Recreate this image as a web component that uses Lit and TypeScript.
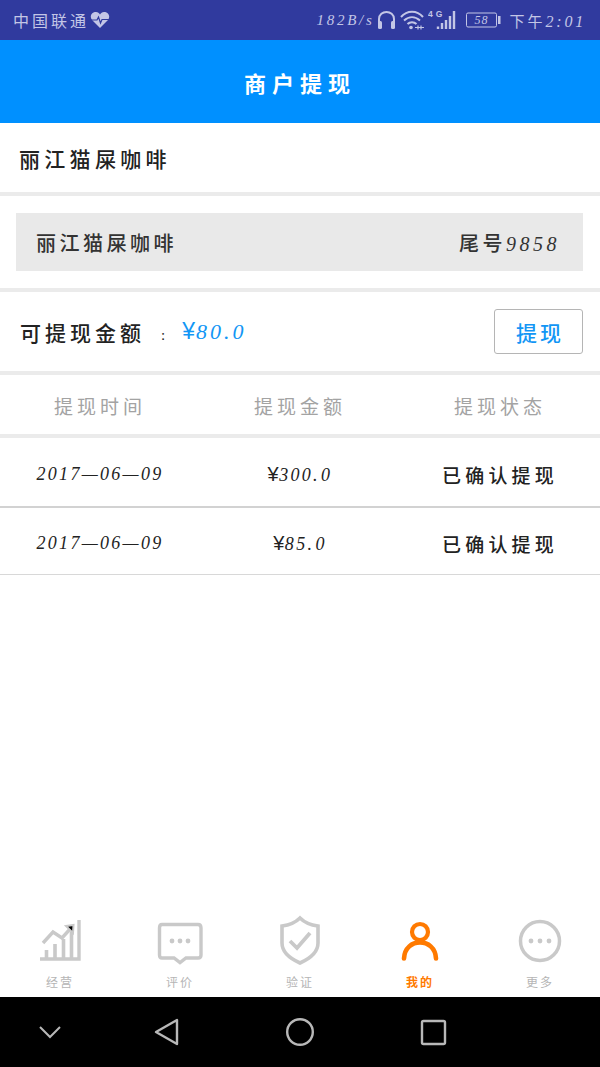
import { LitElement, html, css, svg } from "lit";
import { customElement } from "lit/decorators.js";

const dots = (a: number, b: number, c: number) => svg`
  <circle cx=${a} cy="941" r="2.4" class="dot"/><circle cx=${b} cy="941" r="2.4" class="dot"/><circle cx=${c} cy="941" r="2.4" class="dot"/>`;

const tabs = [
  { label: "经营", icon: svg`<path d="M46.500 960V950M55 960V944M63.500 960V939M71.500 960V932" stroke-width="3.600"/><path d="M43 943L53 932L62 938L71 928" stroke-width="3.400" fill="none"/><path d="M66 926L73.500 925L73 933Z" stroke-width="2"/><path d="M40 959H79V920" stroke-width="3.400" fill="none"/>` },
  { label: "评价", icon: svg`<path d="M162 924.500H198Q201 924.500 201 928V955Q201 958 198 958H186L180 962.500L174 958H162Q159.500 958 159.500 955V928Q159.500 924.500 162 924.500Z" stroke-width="3.400" fill="none"/>${dots(172, 180, 188)}` },
  { label: "验证", icon: svg`<path d="M300 918C304 922 310 925 318 926V943Q318 955 300 963Q282 955 282 943V926C290 925 296 922 300 918Z" stroke-width="3.600" fill="none"/><path d="M290 941L297 948L310 933" stroke-width="3.800" fill="none"/>` },
  { label: "我的", active: true, icon: svg`<circle cx="420" cy="932" r="8" stroke-width="4.200" fill="none"/><path d="M404 958.500C405 937 435 937 436 958.500" stroke-width="4.600" stroke-linecap="round" fill="none"/>` },
  { label: "更多", icon: svg`<circle cx="540" cy="941" r="19.500" stroke-width="3.500" fill="none"/>${dots(531, 540, 549)}` },
];

const records = [
  { date: "2017—06—09", amount: "300", frac: "0", wide: true },
  { date: "2017—06—09", amount: "85", frac: "0", wide: false },
];

@customElement("app-root")
export class AppRoot extends LitElement {
  static styles = css`
    :host {
      display: flex;
      flex-direction: column;
      width: 600px;
      height: 1067px;
      background: #fff;
      overflow: hidden;
      font-family: "Liberation Serif", "Noto Sans CJK SC", serif;
      color: #222;
    }
    i { font-style: italic; }
    .status {
      height: 40px;
      flex: none;
      background: #303a9e;
      color: #c3c6e6;
      display: flex;
      align-items: center;
      padding: 0 14px 0 13px;
      font-size: 16px;
      letter-spacing: 3px;
      box-sizing: border-box;
    }
    .status svg { flex: none; display: block; }
    .carrier { margin-right: 1px; }
    .spacer { flex: 1; }
    .speed { font-size: 15px; letter-spacing: 2.700px; margin-right: 3px; }
    .clock { font-size: 15px; letter-spacing: 3px; margin-left: 8px; white-space: nowrap; }
    .clock i { font-size: 16px; letter-spacing: 2.800px; }
    .header {
      height: 83px;
      flex: none;
      background: #0090ff;
      color: #fff;
      display: flex;
      align-items: center;
      justify-content: center;
      font-size: 22px;
      font-weight: 700;
      letter-spacing: 6px;
    }
    .store {
      height: 69px;
      flex: none;
      display: flex;
      align-items: center;
      padding-left: 19px;
      font-size: 21px;
      font-weight: 500;
      letter-spacing: 4.300px;
    }
    .sep { height: 4px; flex: none; background: #ebebeb; }
    .bank-wrap { height: 92px; flex: none; padding: 17px 17px 17px 16px; box-sizing: border-box; }
    .bank {
      height: 58px;
      background: #e9e9e9;
      display: flex;
      align-items: center;
      justify-content: space-between;
      padding: 0 23px 0 20px;
      font-size: 20px;
      font-weight: 500;
      letter-spacing: 3.500px;
      color: #333;
    }
    .balance {
      height: 79px;
      flex: none;
      display: flex;
      align-items: center;
      padding: 0 17px 0 20px;
      font-size: 21px;
      font-weight: 500;
      letter-spacing: 4px;
    }
    .colon { margin-left: 16px; font-size: 15px; padding-top: 8px; }
    .money { margin-left: 13px; color: #1296f5; font-size: 22px; letter-spacing: 3px; font-weight: 400; }
    .yen { font-size: 23px; font-family: "Liberation Sans", sans-serif; letter-spacing: 1px; }
    .btn {
      margin-left: auto;
      width: 89px;
      height: 45px;
      box-sizing: border-box;
      border: 1px solid #b5b5b5;
      border-radius: 3px;
      background: #fff;
      color: #1296f5;
      font: inherit;
      font-size: 21px;
      font-weight: 500;
      letter-spacing: 3px;
      padding: 0 0 0 3px;
    }
    .row {
      display: grid;
      grid-template-columns: repeat(3, 1fr);
      align-items: center;
      text-align: center;
      flex: none;
    }
    .head { height: 59px; color: #a3a3a3; font-size: 19px; letter-spacing: 4px; padding-top: 1px; box-sizing: border-box; }
    .rec { font-size: 18px; letter-spacing: 2.300px; color: #222; padding-top: 5px; }
    .rec.a { height: 63px; border-bottom: 2px solid #d2d2d2; }
    .rec.b { height: 61px; border-bottom: 1px solid #d8d8d8; }
    .rec .yen { font-size: 20px; letter-spacing: 0.500px; }
    .rec .dot-gap { letter-spacing: 3.500px; }
    .status-cell { letter-spacing: 4.200px; font-size: 19px; font-weight: 500; margin-top: -1px; }
    .fill { flex: 1; }
    .tabs { position: relative; height: 92px; flex: none; display: grid; grid-template-columns: repeat(5, 1fr); }
    .tabs svg { position: absolute; left: 0; top: 0; }
    .icon * { stroke: #c9c9c9; fill-opacity: 1; }
    .icon .dot { stroke: none; fill: #c9c9c9; }
    .icon.on * { stroke: #ff7a00; }
    .tab {
      display: flex;
      align-items: flex-end;
      justify-content: center;
      padding-bottom: 6px;
      font-size: 12px;
      letter-spacing: 2px;
      color: #b5b5b5;
    }
    .tab.active { color: #ff7a00; font-weight: 700; }
    .nav {
      height: 70px;
      flex: none;
      background: #000;
    }
    .nav svg { display: block; }
  `;

  render() {
    return html`
      <div class="status">
        <span class="carrier">中国联通</span>
        <svg width="20" height="18" viewBox="0 0 20 18">
          <path d="M10 17L2 9C-1 5 2 1 6 1C8 1 9 2 10 3.500C11 2 12 1 14 1C18 1 21 5 18 9Z" fill="#c3c6e6"/>
          <path d="M1 9H7L8.500 6L10.500 12L12 8.500H19" stroke="#303a9e" stroke-width="1.200" fill="none"/>
        </svg>
        <span class="spacer"></span>
        <i class="speed">182B/s</i>
        <svg width="19" height="20" viewBox="0 0 19 20">
          <path d="M2 15V9C2 -0.500 17 -0.500 17 9V15" stroke="#c3c6e6" stroke-width="2" fill="none"/>
          <rect x="1" y="11" width="4" height="8" rx="1.500" fill="#c3c6e6"/>
          <rect x="14" y="11" width="4" height="8" rx="1.500" fill="#c3c6e6"/>
        </svg>
        <svg style="margin-left:4px" width="25" height="20" viewBox="0 0 25 20">
          <path d="M1 7C7 0 17 0 23 7M4 10.500C9 6 15 6 20 10.500M7.500 14C10 11.500 14 11.500 16.500 14" stroke="#c3c6e6" stroke-width="2" fill="none"/>
          <circle cx="11" cy="17.500" r="1.800" fill="#c3c6e6"/>
          <path d="M15 17.500H24M18 15.500V19.500M21 15.500V19.500" stroke="#c3c6e6" stroke-width="1.200"/>
        </svg>
        <svg style="margin-left:3px" width="30" height="20" viewBox="0 0 30 20">
          <text x="0" y="7" font-size="8.500" font-weight="700" fill="#c3c6e6" font-family="Liberation Sans">4G</text>
          <path d="M10 19V16.500M14 19V13M18 19V10M22 19V6M26 19V1" stroke="#c3c6e6" stroke-width="2.400"/>
        </svg>
        <svg style="margin-left:8px" width="35" height="16" viewBox="0 0 35 16">
          <rect x="0.500" y="1" width="30" height="14" rx="1.500" stroke="#c3c6e6" fill="none"/>
          <rect x="32" y="4" width="2.500" height="8" fill="#c3c6e6"/>
          <text x="15.500" y="12" font-size="12" text-anchor="middle" fill="#c3c6e6" font-style="italic" letter-spacing="1">58</text>
        </svg>
        <span class="clock">下午<i>2:01</i></span>
      </div>
      <div class="header">商户提现</div>
      <div class="store">丽江猫屎咖啡</div>
      <div class="sep"></div>
      <div class="bank-wrap">
        <div class="bank"><span>丽江猫屎咖啡</span><span>尾号<i>9858</i></span></div>
      </div>
      <div class="sep"></div>
      <div class="balance">
        <span>可提现金额</span><span class="colon">:</span>
        <span class="money"><span class="yen">¥</span><i>80.0</i></span>
        <button class="btn">提现</button>
      </div>
      <div class="sep"></div>
      <div class="row head"><span>提现时间</span><span>提现金额</span><span>提现状态</span></div>
      <div class="sep"></div>
      ${records.map(
        (r, i) => html`<div class="row rec ${i === 0 ? "a" : "b"}">
          <i>${r.date}</i>
          <span><span class="yen">¥</span><i>${r.amount}<span class="dot-gap">.</span>${r.frac}</i></span>
          <span class="status-cell">已确认提现</span>
        </div>`
      )}
      <div class="fill"></div>
      <div class="tabs">
        <svg width="600" height="92" viewBox="0 905 600 92">
          ${tabs.map((t) => svg`<g class="icon ${t.active ? "on" : ""}">${t.icon}</g>`)}
        </svg>
        ${tabs.map((t) => html`<div class="tab ${t.active ? "active" : ""}">${t.label}</div>`)}
      </div>
      <div class="nav">
        <svg width="600" height="70" viewBox="0 997 600 70">
          <path d="M40 1027L50 1037L60 1027" stroke="#b8b8b8" stroke-width="2" fill="none"/>
          <path d="M177 1020V1044L156 1032Z" stroke="#b8b8b8" stroke-width="2.400" stroke-linejoin="round" fill="none"/>
          <circle cx="300" cy="1032" r="12.800" stroke="#b8b8b8" stroke-width="2.400" fill="none"/>
          <rect x="422" y="1021" width="23" height="23" rx="1.500" stroke="#b8b8b8" stroke-width="2.400" fill="none"/>
        </svg>
      </div>
    `;
  }
}
